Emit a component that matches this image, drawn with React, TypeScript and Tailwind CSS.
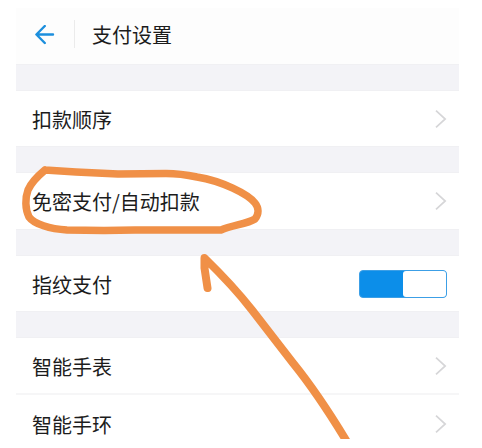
import type { ReactNode } from 'react';

function Chevron() {
  return (
    <svg className="h-[20px] w-[12px]" viewBox="0 0 12 20" fill="none" stroke="#d6d6d8" strokeWidth="1.7">
      <path d="M1 1.6 L10.2 10 L1 18.4" />
    </svg>
  );
}

function Gap() {
  return <div className="h-[27px] shrink-0 border-y border-[#f0f0f3] bg-[#f3f3f7]" />;
}

function Row({ label, children }: { label: string; children?: ReactNode }) {
  return (
    <div className="flex h-full items-center justify-between pr-3 pl-4">
      <span className="pt-0.5 text-[20px] leading-[28px] whitespace-nowrap">{label}</span>
      {children ?? <Chevron />}
    </div>
  );
}

function Toggle() {
  return (
    <div className="flex h-[28px] w-[88px] rounded-[4px] border border-[#3c9fe6] bg-[#0c8ee9]">
      <div className="ml-auto h-full w-[43px] rounded-[3px] bg-white" />
    </div>
  );
}

export default function App() {
  return (
    <div className="relative h-[448px] w-[482px] overflow-hidden bg-white pt-2 pl-4 font-['Noto_Sans_CJK_SC','Noto_Sans',sans-serif] text-[#1c1c1c]">
      <div className="flex h-[431px] w-[443px] flex-col overflow-hidden">
        {/* Header */}
        <header className="flex h-[56px] shrink-0 items-center bg-[#fdfdfd]">
          <svg
            className="ml-[18px] h-[22px] w-[22px]"
            viewBox="0 0 22 22"
            fill="none"
            stroke="#1c8fdd"
            strokeWidth="2.4"
            strokeLinecap="round"
            strokeLinejoin="round"
          >
            <path d="M19 9.500 H2.600 M10.800 1 L2.400 9.500 L10.800 18" />
          </svg>
          <div className="mb-1 ml-[18px] h-[28px] w-px bg-[#ebebeb]" />
          <h1 className="ml-[17px] pb-0.5 text-[20px] leading-[28px] font-normal">支付设置</h1>
        </header>

        {/* Settings list */}
        <Gap />
        <div className="h-[55px] shrink-0">
          <Row label="扣款顺序" />
        </div>
        <Gap />
        <div className="h-[56px] shrink-0">
          <Row label="免密支付/自动扣款" />
        </div>
        <Gap />
        <div className="h-[55px] shrink-0">
          <Row label="指纹支付">
            <Toggle />
          </Row>
        </div>
        <Gap />
        <div className="h-[57px] shrink-0 border-b-2 border-[#f6f6f7]">
          <Row label="智能手表" />
        </div>
        <div className="h-[57px] shrink-0">
          <Row label="智能手环" />
        </div>
      </div>

      {/* Hand-drawn circle and arrow */}
      <svg
        className="pointer-events-none absolute top-0 left-0 h-[439px] w-[482px]"
        viewBox="0 0 482 439"
        fill="none"
        stroke="#f09047"
        strokeLinecap="round"
        strokeLinejoin="round"
      >
        <path
          strokeWidth="7.5"
          d="M45 170 C39 175 31 183 28 190 C25 198 25 209 29 217 C34 224 50 229 67 230 L104 230.500 L135 230 L221 230 C233 225 247 224 255 219 C259 214 259 208 255 203 C248 194 222 181 197 177 C185 174.500 176 173.500 166 173.500 L118 174 L76 172 L45 170"
        />
        <path strokeWidth="8" d="M207.500 288 L204.500 268 L204.500 258 C222 275 238 292 252 310 L293 363 C310 384 328 410 349.500 446" />
      </svg>
    </div>
  );
}
